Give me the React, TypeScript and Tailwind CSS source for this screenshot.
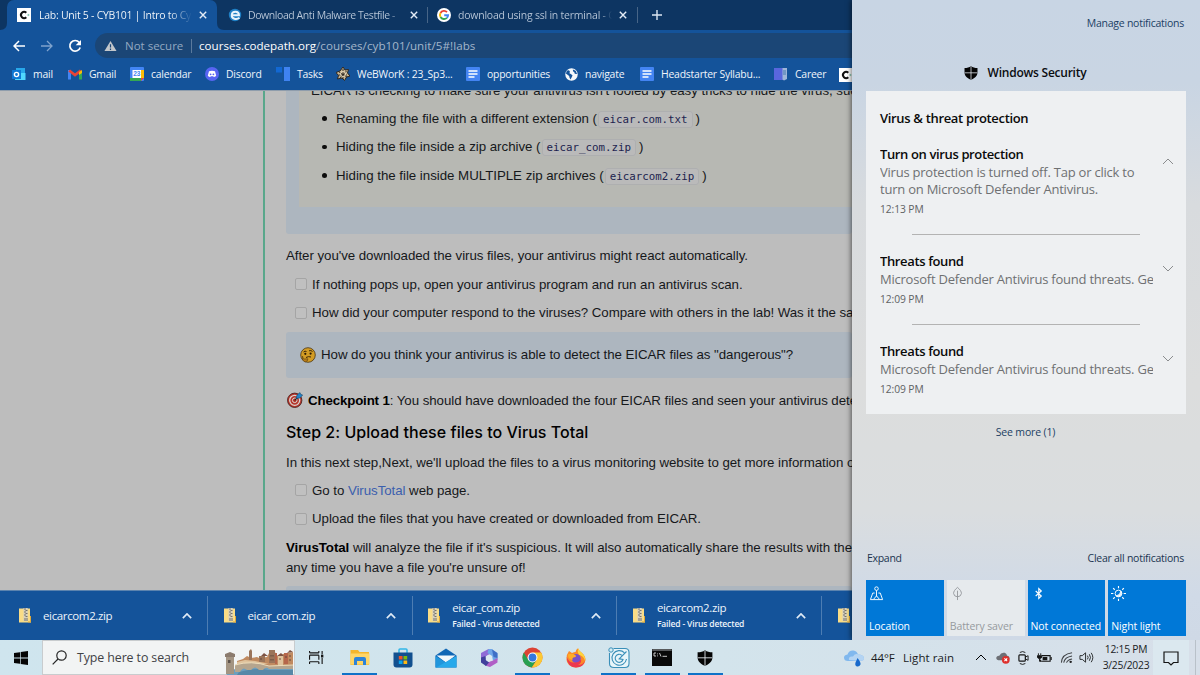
import type { ReactNode } from 'react';

const UI = "font-['Open_Sans','Noto_Sans',sans-serif] whitespace-nowrap";

type IconProps = { className?: string };

function Shield({ className = '' }: IconProps) {
  return (
    <svg viewBox="0 0 16 16" className={className}>
      <path d="M8 0.2C6 1.600 3.600 2.200 .6 2.200V7.500C.6 11.500 4 14.200 8 15.800C12 14.200 15.400 11.500 15.400 7.500V2.200C12.400 2.200 10 1.600 8 .2Z" fill="#050505" />
      <path d="M8 .8V15.500M.8 7.800H15.200" stroke="#dfe4ea" strokeWidth="0.9" />
    </svg>
  );
}

function CodePath({ className = '' }: IconProps) {
  return (
    <svg viewBox="0 0 14 14" className={className}>
      <rect width="14" height="14" fill="#fff" />
      <path d="M9.300 4.800A3.100 3.100 0 1 0 9.300 9.200" fill="none" stroke="#111" strokeWidth="2" />
      <path d="M10.300 7H12.500M11.400 5.900V8.100" stroke="#7cc0a8" strokeWidth="0.8" />
    </svg>
  );
}

function Google({ className = '' }: IconProps) {
  return (
    <svg viewBox="0 0 14 14" className={className}>
      <circle cx="7" cy="7" r="7" fill="#fff" />
      <g fill="none" strokeWidth="1.900">
        <path d="M10 4.100A4.100 4.100 0 0 0 3.500 5" stroke="#ea4335" />
        <path d="M3.500 5A4.100 4.100 0 0 0 3.500 9" stroke="#fbbc05" />
        <path d="M3.500 9A4.100 4.100 0 0 0 9.900 9.900" stroke="#34a853" />
        <path d="M9.900 9.900A4.100 4.100 0 0 0 11.100 7.300H7.200" stroke="#4285f4" />
      </g>
    </svg>
  );
}

function EicarLogo() {
  return (
    <svg viewBox="0 0 14 14" className="size-[14px] shrink-0">
      <circle cx="7" cy="7" r="6.200" fill="#1f7fc4" />
      <path d="M3.500 7.300H11C11 2.800 4.200 2.600 3.700 7C3.400 11 8.500 12 11.500 9.800" fill="none" stroke="#e8f4fc" strokeWidth="1.900" />
    </svg>
  );
}

function TabClose() {
  return (
    <svg viewBox="0 0 8 8" className="size-2 shrink-0">
      <path d="M.8.8L7.200 7.200M7.200.8L.8 7.200" stroke="#e4ecf6" strokeWidth="1.400" />
    </svg>
  );
}

function DocsIcon() {
  return (
    <svg viewBox="0 0 14 14" className="size-[14px] shrink-0">
      <rect width="14" height="14" rx="1" fill="#4384f3" />
      <path d="M2.500 4H11.500M2.500 7H11.500M2.500 10H8.500" stroke="#fff" strokeWidth="1.400" />
    </svg>
  );
}

function ZipIcon() {
  return (
    <svg viewBox="0 0 12 15" className="h-[15px] w-3 shrink-0">
      <path d="M0 .5H11V12.500H12V14.500H0Z" fill="#f9dc86" />
      <path d="M11 8H12V14.500H9V13.500H11Z" fill="#e0a93a" />
      <rect x="4.500" y="0" width="4.200" height="13" fill="#d5d0c0" />
      <path d="M5 1H7M6.500 2.500H8.500M5 4H7M6.500 5.500H8.500M5 7H7M6.500 8.500H8.500M6 10V13M8 10V13" stroke="#6b6860" strokeWidth="0.9" />
    </svg>
  );
}

function Chevron({ down = false, className = '' }: { down?: boolean; className?: string }) {
  return (
    <svg viewBox="0 0 12 7" className={className} fill="none" stroke="currentColor">
      <path d={down ? 'M1 1L6 6L11 1' : 'M1 6L6 1L11 6'} />
    </svg>
  );
}

const TAB_TITLE = 'overflow-hidden bg-linear-to-r to-transparent bg-clip-text text-[10.5px] text-transparent';

function TabStrip() {
  return (
    <div className="flex h-[30px] shrink-0 items-stretch bg-[#0d3562] pl-[7px]">
      <div className="relative flex w-[210px] items-center rounded-t-[7px] bg-[#14539a] pl-[10px]">
        <svg viewBox="0 0 7 7" className="absolute bottom-0 -left-[7px] size-[7px]"><path d="M7 0V7H0Q7 7 7 0" fill="#14539a" /></svg>
        <svg viewBox="0 0 7 7" className="absolute bottom-0 -right-[7px] size-[7px]"><path d="M0 0V7H7Q0 7 0 0" fill="#14539a" /></svg>
        <CodePath className="size-[14px] shrink-0" />
        <div className={`${UI} ${TAB_TITLE} mt-px ml-2 w-[153px] from-white from-85% tracking-[-0.260px]`}>Lab: Unit 5 - CYB101 | Intro to Cy</div>
        <div className="ml-[7px]"><TabClose /></div>
      </div>
      <div className="flex w-[210px] items-center pl-[11px]">
        <EicarLogo />
        <div className={`${UI} ${TAB_TITLE} mt-px ml-[6px] w-[155px] from-[#bccadb] from-90% tracking-[-0.430px]`}>Download Anti Malware Testfile -</div>
        <div className="ml-[7px]"><TabClose /></div>
      </div>
      <div className="my-[7px] w-px bg-[#476587]" />
      <div className="flex w-[209px] items-center pl-[9px]">
        <Google className="size-[14px] shrink-0" />
        <div className={`${UI} ${TAB_TITLE} mt-px ml-[7px] w-[154px] from-[#bccadb] from-92% tracking-[-0.220px]`}>download using ssl in terminal - G</div>
        <div className="ml-[7px]"><TabClose /></div>
      </div>
      <div className="my-[7px] w-px bg-[#476587]" />
      <svg viewBox="0 0 10 10" className="mt-[10px] ml-[14px] size-[10px]"><path d="M5 0V10M0 5H10" stroke="#dbe6f2" strokeWidth="1.400" /></svg>
    </div>
  );
}

function Toolbar() {
  return (
    <div className="flex h-[30px] shrink-0 items-center bg-[#14539a] pt-px pl-[13px]">
      <svg viewBox="0 0 12 12" className="size-3"><path d="M12 6H1.300M6 1L1 6L6 11" fill="none" stroke="#fff" strokeWidth="1.500" /></svg>
      <svg viewBox="0 0 12 12" className="ml-4 size-3"><path d="M0 6H10.700M6 1L11 6L6 11" fill="none" stroke="#7fa3cd" strokeWidth="1.300" /></svg>
      <svg viewBox="0 0 14 14" className="ml-[15px] size-[14px]">
        <path d="M11.300 3.500A5.300 5.300 0 1 0 12.200 8.500" fill="none" stroke="#fff" strokeWidth="1.700" />
        <path d="M13 1V6.300H7.700Z" fill="#fff" />
      </svg>
      <div className="ml-[13px] flex h-[25px] flex-1 items-center rounded-l-full bg-[#1b4676] pl-[9px]">
        <svg viewBox="0 0 14 12" className="h-3 w-[13px] shrink-0">
          <path d="M7 .5L13.500 11.500H.5Z" fill="#c3c7cb" />
          <path d="M7 4V7.500M7 8.700V10.200" stroke="#1b4676" strokeWidth="1.300" />
        </svg>
        <span className={`${UI} ml-2 w-[60px] text-[11.500px] text-[#93a9c2]`}>Not secure</span>
        <span className="ml-[6px] h-[14px] w-px bg-[#5b7a9d]" />
        <span className={`${UI} ml-[7px] text-[11.600px] text-[#a3b6cb]`}><span className="text-white">courses.codepath.org</span><span className="tracking-[0.060px]">/courses/cyb101/unit/5#!labs</span></span>
      </div>
    </div>
  );
}

function Bookmark({ icon, label, className }: { icon: ReactNode; label: string; className: string }) {
  return (
    <div className={`flex shrink-0 items-center gap-[7px] ${className}`}>
      {icon}
      <span className={`${UI} text-[10.400px] font-medium tracking-[-0.200px] text-[#f1f5fa]`}>{label}</span>
    </div>
  );
}

function Bookmarks() {
  return (
    <div className="flex h-[30px] shrink-0 items-center overflow-hidden bg-[#14539a] pb-px pl-3">
      <Bookmark className="w-[56px]" label="mail" icon={
        <svg viewBox="0 0 14 14" className="size-[14px] shrink-0"><path d="M4 1H13V9H4Z" fill="#28a8ea" /><path d="M4 6L13.500 6V13H3Z" fill="#50d9ff" /><rect y="3" width="9" height="9" fill="#0f78d4" /><circle cx="4.500" cy="7.500" r="2.100" fill="none" stroke="#fff" strokeWidth="1.400" /></svg>} />
      <Bookmark className="w-[62px]" label="Gmail" icon={
        <svg viewBox="0 0 14 11" className="h-[11px] w-[14px] shrink-0"><path d="M0 1H3V10.500H0Z" fill="#4285f4" /><path d="M11 3H14V10.500H11Z" fill="#34a853" /><path d="M1.200 1.500L7 6L12.800 1.500" fill="none" stroke="#ea4335" strokeWidth="2.800" /><path d="M11 3L14 1V4L11 6Z" fill="#fbbc04" /></svg>} />
      <Bookmark className="w-[75px]" label="calendar" icon={
        <svg viewBox="0 0 14 14" className="size-[14px] shrink-0"><rect width="14" height="14" rx="1" fill="#4285f4" /><path d="M11 3H14V11H11Z" fill="#fbbc04" /><path d="M3 11H11V14H0V11Z" fill="#34a853" /><path d="M11 11H14L11 14Z" fill="#ea4335" /><rect x="2.500" y="3" width="8.500" height="8" fill="#fff" /><text x="6.800" y="9.400" fontSize="6.500" textAnchor="middle" fontFamily="Liberation Sans" fontWeight="bold" fill="#4285f4">23</text></svg>} />
      <Bookmark className="w-[71px]" label="Discord" icon={
        <svg viewBox="0 0 14 14" className="size-[14px] shrink-0"><circle cx="7" cy="7" r="7" fill="#5865f2" /><path d="M4 4.300Q7 3.300 10 4.300L11.200 8.800Q10 10 8.800 10L8.200 9.300H5.800L5.200 10Q4 10 2.800 8.800Z" fill="#fff" /><circle cx="5.600" cy="7.300" r=".9" fill="#5865f2" /><circle cx="8.400" cy="7.300" r=".9" fill="#5865f2" /></svg>} />
      <Bookmark className="w-[60px]" label="Tasks" icon={
        <svg viewBox="0 0 14 14" className="size-[14px] shrink-0"><rect width="6" height="5.500" fill="#1268d3" /><rect x="8" width="6" height="14" fill="#3f83f1" /></svg>} />
      <Bookmark className="w-[130px]" label="WeBWorK : 23_Sp3..." icon={
        <svg viewBox="0 0 14 14" className="size-[14px] shrink-0"><g stroke="#2b2621" fill="none"><path d="M7 0L9 3L12.500 2.500L11.500 6L14 9L10.500 10L8.500 13.500L6 11L1.500 12L2.500 8.500L0 5.500L4 4Z" fill="#c9b691" strokeWidth="1" /><path d="M3 5L11 10M10.500 4L4 11M7 2V12M2.500 8H11" strokeWidth=".9" /><circle cx="7" cy="7" r="2.500" stroke="#eadcc0" /></g></svg>} />
      <Bookmark className="w-[99px]" label="opportunities" icon={<DocsIcon />} />
      <Bookmark className="w-[75px]" label="navigate" icon={
        <svg viewBox="0 0 14 14" className="size-[13px] shrink-0"><circle cx="7" cy="7" r="6.700" fill="#f5f8fb" /><path d="M2 3Q4 2 5 3.200Q6 4.500 4.500 5.500L7 7Q9 8 7.500 9.500L6 12.500Q4.500 10.500 4.500 8.500L1 6ZM8.500 1.500Q8 4 10 4.500Q10 7 13 6.500L11.500 3Z" fill="#14539a" /></svg>} />
      <Bookmark className="w-[134px]" label="Headstarter Syllabu..." icon={<DocsIcon />} />
      <Bookmark className="w-[65px]" label="Career" icon={
        <svg viewBox="0 0 14 14" className="size-[14px] shrink-0"><rect y="1" width="9" height="12" fill="#5966dd" /><path d="M8.500 1H13V12L10 13.500L8.500 12.500Z" fill="#9fb6d8" /><path d="M9 3H12V8H9Z" fill="#7297c4" /></svg>} />
      <CodePath className="size-[14px] shrink-0" />
    </div>
  );
}

const BODY = "font-['Liberation_Sans',Arial,sans-serif] text-[13.300px] tracking-[-0.055px] whitespace-nowrap text-[#16181b]";

function Chip({ children }: { children: ReactNode }) {
  return (
    <code className="mx-px rounded-[3px] border border-[#aeafb0] bg-[#bababa] px-[4px] py-px font-['DejaVu_Sans_Mono',monospace] text-[10.800px] tracking-normal text-[#1d1f4f]">{children}</code>
  );
}

function Bullet({ text, file }: { text: string; file: string }) {
  return (
    <li className="flex h-[28.500px] items-center">
      <span className="mr-[9.500px] size-[4.500px] shrink-0 rounded-full bg-[#0c0c0c]" />
      <span className="pt-px"><span className="tracking-[-0.025px]">{text} (</span><Chip>{file}</Chip><span className="ml-[2px]">)</span></span>
    </li>
  );
}

function Task({ children }: { children: ReactNode }) {
  return (
    <div className="flex h-[28.500px] items-center pl-[9px]">
      <span className="mr-[5px] size-3 shrink-0 rounded-[2px] border border-[#a5a5a5] bg-[#c0c0c0]" />
      <span className="pt-px">{children}</span>
    </div>
  );
}

function Thinking() {
  return (
    <svg viewBox="0 0 16 16" className="mr-[5px] size-4 shrink-0">
      <circle cx="8" cy="8" r="7.300" fill="#d39c24" stroke="#4a3510" strokeWidth=".8" />
      <path d="M3.500 5Q5 3.500 6.500 4.500M9 3.800Q11 3 12.500 4.500M6 10.500Q8.500 9 11 10" stroke="#3b2608" fill="none" strokeWidth="1" />
      <circle cx="5.300" cy="6.800" r="1.100" fill="#2b1a05" /><circle cx="10.600" cy="6.600" r="1.100" fill="#2b1a05" />
      <path d="M2.500 9L3.500 12L8 11.800Q8 14.500 5 15L2.500 13Z" fill="#b87b18" stroke="#4a3510" strokeWidth=".5" />
    </svg>
  );
}

function Dart() {
  return (
    <svg viewBox="0 0 16 16" className="mr-[5px] size-4 shrink-0">
      <circle cx="7.700" cy="8.300" r="7.200" fill="#b8352b" stroke="#40201d" strokeWidth=".8" />
      <circle cx="7.700" cy="8.300" r="5" fill="none" stroke="#d8d5d0" strokeWidth="1.300" />
      <circle cx="7.700" cy="8.300" r="2.300" fill="#b8352b" stroke="#d8d5d0" />
      <path d="M7.700 8.300L12 4" stroke="#222" strokeWidth="1.200" />
      <path d="M9 6.500L10 3L13 .5L13.700 2.300L15.700 3L13 6Z" fill="#2384c8" stroke="#143a59" strokeWidth=".5" />
    </svg>
  );
}

function Lesson() {
  return (
    <div className="flex min-h-0 flex-1 overflow-hidden border-t border-[#8f9dac] bg-[#bdbdbd]">
      <div className="w-[265px] shrink-0 border-r-2 border-[#59a78b]" />
      <div className={`${BODY} ml-[21px] w-[566px] shrink-0`}>
        <div className="h-[143px] rounded-b-[3px] bg-[#adb6bf] pl-[13px]">
          <div className="h-[116px] overflow-hidden bg-[#b7b8b3] pl-[12px]">
            <div className="-mt-[9px] h-[22px] leading-[17px] tracking-[-0.045px]">EICAR is checking to make sure your antivirus isn't fooled by easy tricks to hide the virus, such</div>
            <ul className="pl-[11px]">
              <Bullet text="Renaming the file with a different extension" file="eicar.com.txt" />
              <Bullet text="Hiding the file inside a zip archive" file="eicar_com.zip" />
              <Bullet text="Hiding the file inside MULTIPLE zip archives" file="eicarcom2.zip" />
            </ul>
          </div>
        </div>
        <div className="mt-[7px] flex h-[29px] items-center pt-px">After you've downloaded the virus files, your antivirus might react automatically.</div>
        <Task>If nothing pops up, open your antivirus program and run an antivirus scan.</Task>
        <Task>How did your computer respond to the viruses? Compare with others in the lab! Was it the same</Task>
        <div className="mt-[5px] flex h-[46px] items-center rounded-[3px] bg-[#adb6bf] pl-[14px]"><Thinking /><span>How do you think your antivirus is able to detect the EICAR files as "dangerous"?</span></div>
        <div className="mt-[7px] flex h-[30px] items-center pl-[1px]"><Dart /><span className="pt-[1.500px]"><b className="tracking-[-0.150px] text-black">Checkpoint 1</b>: You should have downloaded the four EICAR files and seen your antivirus detect</span></div>
        <h2 className="flex h-[33px] items-center font-['Inter',sans-serif] text-[16px] font-medium tracking-[0.035px] text-black">Step 2: Upload these files to Virus Total</h2>
        <div className="flex h-[28px] items-center pt-px">In this next step,Next, we'll upload the files to a virus monitoring website to get more information on</div>
        <Task>Go to <span className="text-[#3b5fae]">VirusTotal</span> web page.</Task>
        <Task>Upload the files that you have created or downloaded from EICAR.</Task>
        <div className="mt-[5px] leading-5"><b className="text-black">VirusTotal</b> will analyze the file if it's suspicious. It will also automatically share the results with the<br />any time you have a file you're unsure of!</div>
        <div className="mt-[8px] h-5 rounded-t-[3px] bg-[#adb6bf]" />
      </div>
    </div>
  );
}

function Download({ name, failed = false, first = false }: { name: string; failed?: boolean; first?: boolean }) {
  return (
    <div className={`flex h-[39px] shrink-0 items-center border-r border-[#4d7db3] pr-[15.500px] ${first ? 'w-[208px] pl-[19px]' : 'w-[204.700px] pl-[15.500px]'}`}>
      <ZipIcon />
      <div className={`${UI} ml-3 flex-1 text-[#eef4fb]`}>
        <div className="text-[11.500px] leading-[16px] tracking-[-0.360px]">{name}</div>
        {failed && <div className="mt-px text-[8.500px] leading-[14px] font-semibold tracking-[-0.150px]">Failed - Virus detected</div>}
      </div>
      <Chevron className="h-[6px] w-[10px] stroke-2 text-[#dfeaf6]" />
    </div>
  );
}

function Notice({ title, body, time, open = false }: { title: string; body: ReactNode; time: string; open?: boolean }) {
  return (
    <div className="flex">
      <div className="w-[273px] overflow-hidden">
        <div className="text-[13px] leading-[18px] font-semibold tracking-[-0.370px] text-[#0a0a0a]">{title}</div>
        <div className="pt-px text-[13px] leading-[17px] tracking-[-0.225px] text-[#6e7072]">{body}</div>
        <div className="mt-[3px] text-[10.300px] leading-4 tracking-[-0.100px] text-[#606264]">{time}</div>
      </div>
      <Chevron down={!open} className="mt-[13px] ml-[9px] h-[7px] w-3 text-[#8a8c8e]" />
    </div>
  );
}

function QuickTile({ label, on = true, children }: { label: string; on?: boolean; children: ReactNode }) {
  return (
    <div className={`flex h-[56px] flex-1 flex-col justify-between pt-[6px] pl-[3px] ${on ? 'bg-[#0078d7] text-white' : 'bg-[#e6eaed] text-[#969a9e]'}`}>
      <svg viewBox="0 0 16 16" className="size-[15px]" fill="none" stroke="currentColor">{children}</svg>
      <div className="text-[10.500px] leading-[19px] tracking-[-0.110px]">{label}</div>
    </div>
  );
}

function ActionCenter() {
  return (
    <aside className={`${UI} z-10 flex w-[348px] shrink-0 flex-col bg-[linear-gradient(to_bottom,#c8d5e4_0%,#c9d5e3_13%,#d8dbde_32%,#dcdddd_60%,#dadddf_80%,#d0dae7_93%,#cfd9e6_100%)] px-[14px] shadow-[-1px_0_5px_rgba(0,0,0,0.55)]`}>
      <div className="mt-[14px] self-end pr-[2px] text-[10.500px] leading-[18px] tracking-[-0.250px] text-[#1c3f64]">Manage notifications</div>
      <div className="mt-[32px] flex h-[18px] items-center justify-center pr-[2px]">
        <Shield className="mr-[10px] size-[14px]" />
        <span className="text-[12px] font-semibold tracking-[-0.240px] text-[#0b0d10]">Windows Security</span>
      </div>
      <div className="mt-[9px] h-[323px] bg-[#eef0f2] pl-[14px]">
        <div className="pt-[18px] text-[13px] leading-[18px] font-semibold tracking-[-0.330px] text-[#0a0a0a]">Virus &amp; threat protection</div>
        <div className="mt-[18px]">
          <Notice open title="Turn on virus protection" body={<>Virus protection is turned off. Tap or click to<br />turn on Microsoft Defender Antivirus.</>} time="12:13 PM" />
        </div>
        <div className="mt-[17px] ml-[32px] h-px w-[228px] bg-[#b3b3b3]" />
        <div className="mt-[17px]"><Notice title="Threats found" body="Microsoft Defender Antivirus found threats. Get" time="12:09 PM" /></div>
        <div className="mt-[17px] ml-[32px] h-px w-[228px] bg-[#b3b3b3]" />
        <div className="mt-[17px]"><Notice title="Threats found" body="Microsoft Defender Antivirus found threats. Get" time="12:09 PM" /></div>
      </div>
      <div className="mt-[9px] pr-px text-center text-[10.500px] leading-[18px] tracking-[-0.150px] text-[#1c3f64]">See more (1)</div>
      <div className="mt-auto flex justify-between pr-[2px] pl-px text-[10.500px] leading-[18px] tracking-[-0.250px] text-[#1b3450]">
        <span className="tracking-[-0.300px]">Expand</span><span>Clear all notifications</span>
      </div>
      <div className="mt-[13px] mb-1 flex gap-[3px]">
        <QuickTile label="Location">
          <circle cx="8" cy="2.800" r="1.900" /><path d="M8 4.700V11M6 7.500H4L1.500 14.500H14.500L12 7.500H10M5 14L8 10.500L11 14" />
        </QuickTile>
        <QuickTile label="Battery saver" on={false}>
          <path d="M8 15V5M8 1.500C5 4 3.800 6 3.800 8Q4.500 11.500 8 11.500Q11.500 11.500 12.200 8C12.200 6 11 4 8 1.500Z" />
        </QuickTile>
        <QuickTile label="Not connected">
          <path d="M5 5.300L11 10.700L8.300 13.200V2.800L11 5.300L5 10.700" strokeWidth="1.200" />
        </QuickTile>
        <QuickTile label="Night light">
          <circle cx="8" cy="8" r="3.600" /><path d="M5.500 10.500A3.600 3.600 0 0 0 10.500 5.500Q10 10 5.500 10.500Z" fill="currentColor" />
          <path d="M8 0V2.500M8 13.500V16M0 8H2.500M13.500 8H16M2.300 2.300L4 4M12 12L13.700 13.700M13.700 2.300L12 4M2.300 13.700L4 12" strokeWidth="1.200" />
        </QuickTile>
      </div>
    </aside>
  );
}

function Slot({ children, running = false }: { children: ReactNode; running?: boolean }) {
  return (
    <div className="flex h-full w-[43.200px] shrink-0 flex-col items-center">
      <div className="flex flex-1 items-center pt-[2px]">{children}</div>
      <div className={`h-[2px] w-[35px] ${running ? 'bg-[#0f72c8]' : ''}`} />
    </div>
  );
}

function BridgeArt() {
  return (
    <svg viewBox="0 0 70 27" className="h-[27px] w-[70px]">
      <path d="M3 27L10 22L20 17H70V27Z" fill="#6d9fbe" />
      <path d="M16 24Q35 19 45 22L70 22V27H14Z" fill="#5688a8" />
      <path d="M14 13L20 11L24 8L28 10L34 9L36 10L44 9L46 5L52 4L54 8L60 6L70 4V19H14Z" fill="#c08a60" />
      <path d="M26 3L28 1L29 3V12H26ZM46 2H52V15H46ZM36 8H42V14H36Z" fill="#9a745a" />
      <path d="M14 14L22 12L32 13L46 16H14ZM55 8H60V18H55Z" fill="#dfc39d" />
      <path d="M61 5H65V16H61ZM52 5H54V16H52Z" fill="#b5664b" />
      <path d="M38 8L41 5L45 8ZM54 8L58 5L61 8ZM64 5L67 2L70 4Z" fill="#7d5344" />
      <path d="M48 7V8.500M50 7V8.500M48 11V12.500M50 11V12.500M57 10V12M63 8V10M67 7V9M67 11V13M38 10V12" stroke="#5b443a" strokeWidth=".9" />
      <path d="M12 17Q28 12 46 18L70 17V21H46Q43 18 40 22H36Q32 17 28 22H24Q20 18 17 24H12Z" fill="#b5a58e" />
      <path d="M12 17Q28 12 46 18L70 17" stroke="#eddcba" fill="none" />
      <path d="M3 7H11V26H3Z" fill="#a39482" /><path d="M2 6L7 4L12 6V9H2Z" fill="#8b7b6d" /><path d="M5 12H7.500V15H5Z" fill="#5d534b" />
    </svg>
  );
}

function TaskIcons() {
  return (
    <>
      <Slot>
        <svg viewBox="0 0 16 16" className="size-[15px]" fill="none" stroke="#151515" strokeWidth="1.200"><path d="M.6 3V1M10.500 1V3M.6 3H10.500M.6 5.500V10.500M10.500 5.500V10.500M.6 5.500H10.500M.6 12.500H10.500M.6 12.500V15M10.500 12.500V15M14 1V4.500M14 8.500V15" /><path d="M12.800 5H15.300V8H12.800Z" fill="#151515" stroke="none" /></svg>
      </Slot>
      <Slot running>
        <svg viewBox="0 0 20 17" className="h-[17px] w-5"><path d="M.5 1H8L9.500 3H19V16H.5Z" fill="#f5b62c" /><path d="M.5 4.500H19.500V15.500H.5Z" fill="#ffd667" /><path d="M4 16V10Q4 8 6 8H14Q16 8 16 10V16H13V12H7V16Z" fill="#2e84d8" /></svg>
      </Slot>
      <Slot>
        <svg viewBox="0 0 20 20" className="size-5"><path d="M6 5V2Q6 1 7 1H13Q14 1 14 2V5" fill="none" stroke="#32b6e8" strokeWidth="1.500" /><path d="M.5 4.500H19.500V16.500Q19.500 19.500 16.500 19.500H3.500Q.5 19.500 .5 16.500Z" fill="#12508f" /><path d="M5.800 8H9.500V11.500H5.800Z" fill="#f05225" /><path d="M10.500 8H14.200V11.500H10.500Z" fill="#80bb0a" /><path d="M5.800 12.500H9.500V16H5.800Z" fill="#06a5ee" /><path d="M10.500 12.500H14.200V16H10.500Z" fill="#fdb913" /></svg>
      </Slot>
      <Slot>
        <svg viewBox="0 0 22 20" className="h-5 w-[22px]"><path d="M.5 7.500L11 .5L21.500 7.500V19.500H.5Z" fill="#1066b5" /><path d="M1.500 7.500H20.500L11 14.500Z" fill="#f1f7fb" /><path d="M.5 8L11 14.500L2 19.500H.5Z" fill="#2196dc" /><path d="M21.500 8V19.500H1Z" fill="#27a9ea" /></svg>
      </Slot>
      <Slot>
        <svg viewBox="0 0 20 20" className="size-5"><path d="M9.500 1L2 5V10L5.500 12.500L7 8.500L12 5.500L12.500 1.500Z" fill="#8f6ad6" /><path d="M9.500 1H13L18.500 5.500V12L14 12.500L12.500 7.500L8.500 5Z" fill="#6fa6e8" /><path d="M18.500 10V14.500L11 19L6 17.500L8 14L13 13Z" fill="#b05fc6" /><path d="M2 9.500L6.500 8L7.500 12.500L10 14.500L7 18L2 14.500Z" fill="#41409c" /><path d="M13 1.500L18.500 5V10L14.500 9Z" fill="#3e6fc6" /><path d="M10 6.500L13.300 8.300V12L10 14L6.800 12V8.300Z" fill="#dce9f1" /></svg>
      </Slot>
      <Slot running>
        <svg viewBox="0 0 20 20" className="size-[21px]"><circle cx="10" cy="10" r="9.500" fill="#dc4334" /><path d="M1.800 5.200A9.500 9.500 0 0 0 9.300 19.500L13.900 12.300H6Z" fill="#27a052" /><path d="M18.300 5.300H10L14 12.300L9.300 19.500A9.500 9.500 0 0 0 18.300 5.300" fill="#fcc934" /><circle cx="10" cy="10" r="4.700" fill="#fff" /><circle cx="10" cy="10" r="3.700" fill="#3478dd" /></svg>
      </Slot>
      <Slot>
        <svg viewBox="0 0 20 20" className="size-5"><path d="M3 3L6 5Q8 4 9.500 4Q10 1.500 12 .3Q13 3 16 5Q19.600 8 19.500 12A9.500 8 0 0 1 .5 11Q.5 6 3 3Z" fill="#fb8a28" /><path d="M12 .3Q13 3 16 5Q20 9 19 13Q18 8 13 7Q11 4 12 .3" fill="#ffd43b" /><circle cx="10.200" cy="10.500" r="4.500" fill="#7950c9" /><path d="M.7 9Q3 15 8 14.500Q13 15 15 11Q16 15 12 17Q17 17 19 12.500Q17.500 19.500 10 19.500Q1 19 .7 9" fill="#ec3850" /><path d="M2 6.500Q6 5 9 7Q11 8 9 9.300Q6 9 6.500 12Q2 11 2 6.500" fill="#ffad27" /></svg>
      </Slot>
      <Slot running>
        <svg viewBox="0 0 22 22" className="size-[22px]" fill="none" stroke="#3a8fb8"><path d="M5.500 1.500H17Q21 1.500 21 5.500V16.500Q21 20.500 17 20.500H6Q1.500 20.500 1.500 16.500V6" fill="#e8f5f9" strokeWidth="1.100" /><circle cx="3" cy="3" r="2.200" fill="#d4edf5" /><path d="M16.500 5.800A7.300 7.300 0 1 0 18.500 12" strokeWidth="1.100" /><path d="M13.700 8.200A4 4 0 1 0 15 12.500L11.200 11.800L18.500 4.500" strokeWidth="1.100" /></svg>
      </Slot>
      <Slot running>
        <svg viewBox="0 0 20 17" className="h-[17px] w-5"><rect width="20" height="17" fill="#090909" /><path d="M.3 1H19.700" stroke="#8e9295" strokeWidth="1.200" /><path d="M2 4V7M2 4H4M2 7H4M5.500 4.500V5.300M5.500 6.500V7.300M7.500 4L9 7.500M10.500 7.300H15" stroke="#ddd" strokeWidth=".9" /></svg>
      </Slot>
      <Slot running><Shield className="size-[16px]" /></Slot>
    </>
  );
}

function Taskbar() {
  return (
    <footer className={`${UI} z-20 flex h-[35px] items-center bg-linear-to-r from-[#cfe5ee] via-[#d3e4ec] via-60% to-[#d7dfe9] text-[#1a1c1e]`}>
      <div className="flex w-[42px] justify-center">
        <svg viewBox="0 0 14 14" className="size-[14px]"><path d="M0 2L6 1.200V6.600H0ZM6.700 1.100L14 0V6.600H6.700ZM0 7.400H6V12.800L0 12ZM6.700 7.400H14V14L6.700 12.900Z" fill="#050505" /></svg>
      </div>
      <div className="flex h-full w-[253px] items-center border border-[#c8ccce] bg-[#f2f4f4] pl-[9px]">
        <svg viewBox="0 0 15 15" className="size-[15px] shrink-0" fill="none" stroke="#252525" strokeWidth="1.200"><circle cx="9.500" cy="5.500" r="4.700" /><path d="M6 9L.7 14.300" /></svg>
        <span className="ml-[10px] w-[140px] pt-[2px] text-[12.400px] tracking-[-0.100px] text-[#3f4245]">Type here to search</span>
        <div className="mt-[7px] ml-[6px]"><BridgeArt /></div>
      </div>
      <TaskIcons />
      <div className="ml-auto flex h-full items-center">
        <svg viewBox="0 0 22 20" className="h-5 w-[22px]"><path d="M5 13Q1 13 1 9.500Q1 7 4.500 6.500Q6 2 10.500 2.500Q14 3 15 6.500Q20.500 6.500 21 10Q21 13 17 13Z" fill="#80b8ee" /><path d="M6 12Q5 8 10 8.500Q12 5 16 6.500Q21 7 21 10.500Q21 13 17 13Z" fill="#b4d4f3" /><path d="M14.500 10Q18 14 17.500 16.500Q16.500 19 14 18.500Q11.500 17.500 12.500 14.500Z" fill="#1769cb" /></svg>
        <span className="ml-[6px] w-[32px] text-[11.500px] tracking-[-0.100px]">44°F</span>
        <span className="w-[72px] text-[11.500px] tracking-[0.080px]">Light rain</span>
        <Chevron className="h-[7px] w-3 text-black" />
        <svg viewBox="0 0 16 14" className="ml-[8px] h-[13px] w-4"><path d="M3 10Q0 9 1 6.500Q2 5 4 5Q6 1 10 2Q12 3 12.500 5Q15 5 15 8L14 10Z" fill="#6d6f75" /><circle cx="11" cy="9.500" r="4.200" fill="#de302c" /><path d="M9.500 8L12.500 11M12.500 8L9.500 11" stroke="#fff" strokeWidth="1.100" /></svg>
        <svg viewBox="0 0 12 16" className="ml-[7px] h-4 w-[11px]" fill="none" stroke="#151515"><path d="M2 2Q5 0 8 2M2 14Q5 16 8 14" /><rect x="1" y="4.500" width="7" height="7" rx="1" strokeWidth="1.300" /><path d="M8 7L11 5.500V10.500L8 9" /></svg>
        <svg viewBox="0 0 16 10" className="ml-[8px] h-[10px] w-[15px]" fill="none" stroke="#151515"><path d="M5 2.500H14V8.500H5" strokeWidth="1.200" /><path d="M6 3.800H11V7.500H6ZM14.500 4H15.700V7H14.500Z" fill="#151515" stroke="none" /><path d="M.5 2.500H5V4Q5 5.500 2.700 5.500Q.5 5.500 .5 4ZM1.500 0V2M4 0V2M2.700 5.500V8.500H5" fill="#151515" /></svg>
        <svg viewBox="0 0 14 13" className="ml-[8px] h-[13px] w-[13px]" fill="none" stroke="#3e4144"><path d="M1.500 12Q2 3 13 1.500M4 12Q5 6 13 4.800M7 12Q8 9 13 8" strokeWidth="1.100" /><circle cx="11.500" cy="11.200" r="1.300" fill="#202020" stroke="none" /></svg>
        <svg viewBox="0 0 16 13" className="ml-[6px] h-[13px] w-[15px]" fill="none" stroke="#242628"><path d="M1 4.500H3.500L7 1.500V11.500L3.500 8.500H1Z" /><path d="M9 4.500Q10.500 6.500 9 8.500M11 3Q13.500 6.500 11 10M13 1.500Q16.500 6.500 13 11.500" /></svg>
        <div className="ml-[6px] w-[52px] text-center text-[10.300px] leading-[15.500px] tracking-[-0.240px]"><div>12:15 PM</div><div>3/25/2023</div></div>
        <div className="ml-px flex h-full w-[36px] items-center justify-center bg-[#dbe8ef]">
          <svg viewBox="0 0 16 15" className="mt-px h-[15px] w-4"><path d="M1 1H15V11.500H10.500L8 14L5.500 11.500H1Z" fill="none" stroke="#151515" strokeWidth="1.200" /></svg>
        </div>
        <div className="ml-[6px] h-full w-px bg-[#b9c1c9]" />
        <div className="w-1" />
      </div>
    </footer>
  );
}

export default function App() {
  return (
    <div className="flex h-[675px] w-[1200px] flex-col overflow-hidden">
      <div className="flex h-[640px] shrink-0">
        <main className="flex w-[852px] shrink-0 flex-col overflow-hidden">
          <TabStrip />
          <Toolbar />
          <Bookmarks />
          <Lesson />
          <div className="flex h-[50px] shrink-0 items-center overflow-hidden border-t border-[#5c83ae] bg-[#14539a]">
            <Download first name="eicarcom2.zip" />
            <Download name="eicar_com.zip" />
            <Download name="eicar_com.zip" failed />
            <Download name="eicarcom2.zip" failed />
            <div className="pl-[16px]"><ZipIcon /></div>
          </div>
        </main>
        <ActionCenter />
      </div>
      <Taskbar />
    </div>
  );
}
